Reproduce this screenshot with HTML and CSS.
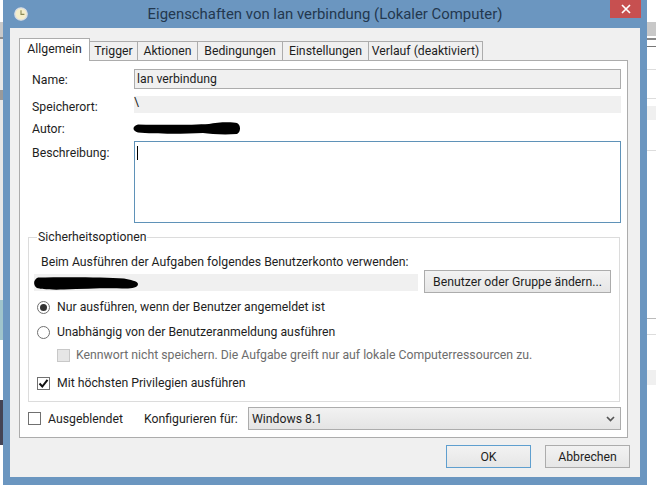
FILE: index.html
```html
<!DOCTYPE html>
<html lang="de">
<head>
<meta charset="utf-8">
<title>Eigenschaften von lan verbindung</title>
<link rel="stylesheet" href="styles.css">
</head>
<body>
<div class="screen">
  <div class="strip strip-left"></div>
  <div class="window">
    <header class="titlebar">
      <svg class="clock" width="14" height="14" viewBox="0 0 14 14">
        <circle cx="7" cy="7" r="6.2" fill="#f4eecb" stroke="#d8dde4" stroke-width="1.3"/>
        <path d="M7 3.2V7.4H10.4" fill="none" stroke="#8a8a55" stroke-width="1.1"/>
      </svg>
      <h1 class="title">Eigenschaften von lan verbindung (Lokaler Computer)</h1>
      <div class="close">
        <svg width="10" height="10" viewBox="0 0 10 10"><path d="M1 1L9 9M9 1L1 9" stroke="#fff" stroke-width="1.7"/></svg>
      </div>
    </header>
    <div class="client">
      <nav class="tabs">
        <div class="tab active">Allgemein</div>
        <div class="tab t-trigger">Trigger</div>
        <div class="tab t-aktionen">Aktionen</div>
        <div class="tab t-bed">Bedingungen</div>
        <div class="tab t-ein">Einstellungen</div>
        <div class="tab t-ver">Verlauf (deaktiviert)</div>
      </nav>
      <section class="panel">
        <div class="form">
          <label class="lbl l-name">Name:</label>
          <div class="input-ro">lan verbindung</div>
          <label class="lbl l-ort">Speicherort:</label>
          <div class="bar-ro">\</div>
          <label class="lbl l-autor">Autor:</label>
          <div class="autor">
            <svg width="108" height="13" viewBox="0 0 108 13"><path d="M5 2.5C30 3 60 3 76 2C84 0 100 0 104 1C108 3 108 10 104 12C90 13 78 12 70 11C50 12 20 12 5 10.5C-1 9 -1 4 5 2.5Z" fill="#000"/></svg>
          </div>
          <label class="lbl l-besch">Beschreibung:</label>
          <div class="textarea"><span class="caret"></span></div>
        </div>
        <fieldset class="group">
          <legend class="legend">Sicherheitsoptionen</legend>
          <p class="account-text">Beim Ausführen der Aufgaben folgendes Benutzerkonto verwenden:</p>
          <div class="account-row">
            <div class="account-bar">
              <svg width="105" height="14" viewBox="0 0 105 14"><path d="M4 1.500C30 1 70 1 90 2.500C96 4 104 5 104 8C104 12 96 13 88 12.500C70 12 50 13 30 13.500C15 14 6 13 3 12C-1 9 -1 4 4 1.500Z" fill="#000"/></svg>
            </div>
            <button class="btn btn-user" type="button">Benutzer oder Gruppe ändern...</button>
          </div>
          <div class="opt opt-r1"><span class="radio checked"></span>Nur ausführen, wenn der Benutzer angemeldet ist</div>
          <div class="opt opt-r2"><span class="radio"></span>Unabhängig von der Benutzeranmeldung ausführen</div>
          <div class="opt opt-sub"><span class="check disabled"></span>Kennwort nicht speichern. Die Aufgabe greift nur auf lokale Computerressourcen zu.</div>
          <div class="opt opt-c1"><span class="check">
            <svg width="11" height="11" viewBox="0 0 11 11"><path d="M1.500 5.500L4.300 8.500L9.500 1.800" fill="none" stroke="#111" stroke-width="2"/></svg>
          </span>Mit höchsten Privilegien ausführen</div>
        </fieldset>
        <div class="bottom">
          <span class="check hidden-box"></span>
          <span class="hidden-label">Ausgeblendet</span>
          <span class="config-label">Konfigurieren für:</span>
          <div class="select">
            <span>Windows 8.1</span>
            <svg width="9" height="6" viewBox="0 0 9 6"><path d="M1 1L4.500 4.500L8 1" fill="none" stroke="#555" stroke-width="1.700"/></svg>
          </div>
        </div>
      </section>
      <footer class="actions">
        <button class="btn btn-dlg btn-ok" type="button">OK</button>
        <button class="btn btn-dlg" type="button">Abbrechen</button>
      </footer>
    </div>
  </div>
  <div class="strip strip-right"></div>
</div>
</body>
</html>
```
FILE: styles.css
```css
* { box-sizing: border-box; }
html, body { margin: 0; padding: 0; background: #fff; }
body {
  font-family: Roboto, "Open Sans", "Liberation Sans", sans-serif;
  font-size: 12.25px;
  color: #1e1e1e;
}
.screen { display: flex; width: 656px; height: 485px; overflow: hidden; }
.strip { flex: none; height: 485px; }
.strip-left {
  width: 3px;
  background: linear-gradient(to bottom,
    #fff 0, #fff 22px, #c9c9c9 22px, #c9c9c9 37px, #8d8d8d 37px, #8d8d8d 39px, #e8e8e8 39px,
    #e8e8e8 90px, #9a9a9a 90px, #9a9a9a 100px, #e8e8e8 100px, #e8e8e8 300px,
    #9fc4cc 300px, #9fc4cc 340px, #fff 340px, #fff 400px, #445 400px, #445 445px, #fff 445px);
}
.strip-right {
  width: 9px;
  background: linear-gradient(to bottom,
    #fff 0, #fff 22px, #c8c8c8 22px, #c8c8c8 36px, #fff 36px, #fff 38px, #888 38px, #888 40px,
    #fff 40px, #fff 46px, #777 46px, #777 47px, #fff 47px, #fff 69px, #ddd 69px, #ddd 70px,
    #fff 70px, #fff 98px, #ddd 98px, #ddd 99px, #fff 99px, #fff 106px, #f0f0f0 106px, #f0f0f0 120px,
    #fff 120px, #fff 150px, #ddd 150px, #ddd 151px, #fff 151px, #fff 318px, #bbb 318px, #bbb 319px,
    #fff 319px, #fff 334px, #ddd 334px, #ddd 335px, #fff 335px, #fff 370px, #f0f0f0 370px, #f0f0f0 385px, #fff 385px);
}
.window {
  flex: none;
  width: 644px;
  height: 485px;
  background: #6b96c0;
  padding: 0 7px 8px 7px;
  display: flex;
  flex-direction: column;
}
.titlebar { flex: none; height: 28px; display: flex; align-items: flex-start; }
.clock { flex: none; margin: 7px 0 0 4px; }
.title {
  flex: 1;
  margin: 4px 0 0 0;
  padding-left: 12px;
  font-weight: 400;
  font-size: 14.9px;
  line-height: 20px;
  text-align: center;
  color: #23384f;
  white-space: nowrap;
}
.close {
  flex: none;
  width: 31px;
  height: 18px;
  margin-right: -1px;
  background: #c75050;
  display: flex;
  align-items: center;
  justify-content: center;
}
.client {
  flex: 1;
  background: #f0f0f0;
  padding: 10px 12px 0 9px;
  display: flex;
  flex-direction: column;
}
.tabs { flex: none; height: 22px; display: flex; align-items: flex-end; position: relative; z-index: 1; }
.tab {
  height: 19px;
  background: #f0f0f0;
  border: 1px solid #acacac;
  border-bottom: 0;
  margin-left: -1px;
  text-align: center;
  line-height: 18px;
  white-space: nowrap;
}
.tab.active {
  width: 71px;
  height: 23px;
  margin: 0 0 -1px 0;
  background: #fff;
  line-height: 21px;
  border-bottom: 0;
}
.t-trigger { width: 49px; }
.t-aktionen { width: 61px; }
.t-bed { width: 86px; }
.t-ein { width: 87px; }
.t-ver { width: 115px; }
.panel {
  flex: none;
  height: 378px;
  background: #fff;
  border: 1px solid #acacac;
  padding: 8px 6px 0 9px;
}
.form {
  display: grid;
  grid-template-columns: 102px 487px;
  grid-template-rows: 20px 17px 14px 82px;
  row-gap: 7px;
  margin-left: 3px;
}
.lbl { display: block; line-height: 16px; }
.l-name { padding-top: 3px; }
.l-ort { padding-top: 3px; }
.l-autor { margin-top: 1px; }
.l-besch { padding-top: 4px; }
.input-ro {
  background: #f0f0f0;
  border: 1px solid #acacac;
  padding-left: 2px;
  line-height: 18px;
}
.bar-ro { background: #f0f0f0; line-height: 13px; }
.autor { height: 13px; margin-left: -1px; margin-top: 2px; line-height: 0; }
.textarea { background: #fff; border: 1px solid #5f92b8; padding: 4px 0 0 2px; }
.caret { display: block; width: 1px; height: 14px; background: #000; }
.group {
  width: 592px;
  height: 173px;
  margin: 6px 0 0 -1px;
  padding: 0 0 0 5px;
  border: 1px solid #dcdcdc;
  min-width: 0;
}
.legend { padding: 0 1px; margin-left: 3px; line-height: 16px; }
.account-text { margin: 9px 0 0 7px; line-height: 16px; }
.account-row { display: flex; align-items: center; height: 23px; }
.account-bar {
  width: 384px;
  height: 17px;
  background: #f0f0f0;
  margin-top: 2px;
  line-height: 0;
}
.account-bar svg { margin-top: 2px; }
.btn {
  font: inherit;
  color: #1e1e1e;
  background: linear-gradient(#f2f2f2, #e6e6e6);
  border: 1px solid #acacac;
  padding: 0;
}
.btn-user { width: 187px; height: 23px; margin-left: 6px; }
.opt { display: flex; align-items: center; height: 16px; white-space: nowrap; }
.opt-r1 { margin: 6px 0 0 3px; }
.opt-r2 { margin: 9px 0 0 3px; }
.opt-sub { margin: 7px 0 0 23px; color: #6d6d6d; }
.opt-c1 { margin: 12px 0 0 3px; }
.radio {
  flex: none;
  width: 13px;
  height: 13px;
  margin-right: 7px;
  border: 1px solid #707070;
  border-radius: 50%;
  background: #fff;
  display: flex;
  align-items: center;
  justify-content: center;
}
.radio.checked::after {
  content: "";
  width: 7px;
  height: 7px;
  border-radius: 50%;
  background: #333;
}
.check {
  flex: none;
  width: 13px;
  height: 13px;
  margin-right: 7px;
  border: 1px solid #707070;
  background: #fff;
  display: inline-flex;
  align-items: center;
  justify-content: center;
}
.check.disabled { background: #e6e6e6; border-color: #c8c8c8; margin-right: 6px; }
.bottom { display: flex; align-items: center; height: 23px; margin: 5px 0 0 -1px; }
.hidden-box { margin-right: 7px; }
.hidden-label { width: 96px; }
.config-label { width: 104px; }
.select {
  width: 373px;
  height: 23px;
  background: linear-gradient(#f2f2f2, #e4e4e4);
  border: 1px solid #acacac;
  display: flex;
  align-items: center;
  justify-content: space-between;
  padding: 0 5px 0 3px;
}
.actions { display: flex; justify-content: flex-end; gap: 14px; margin: 7px -2px 0 0; }
.btn-dlg { width: 85px; height: 23px; }
.btn-ok { border-color: #5f9fcf; }
```
